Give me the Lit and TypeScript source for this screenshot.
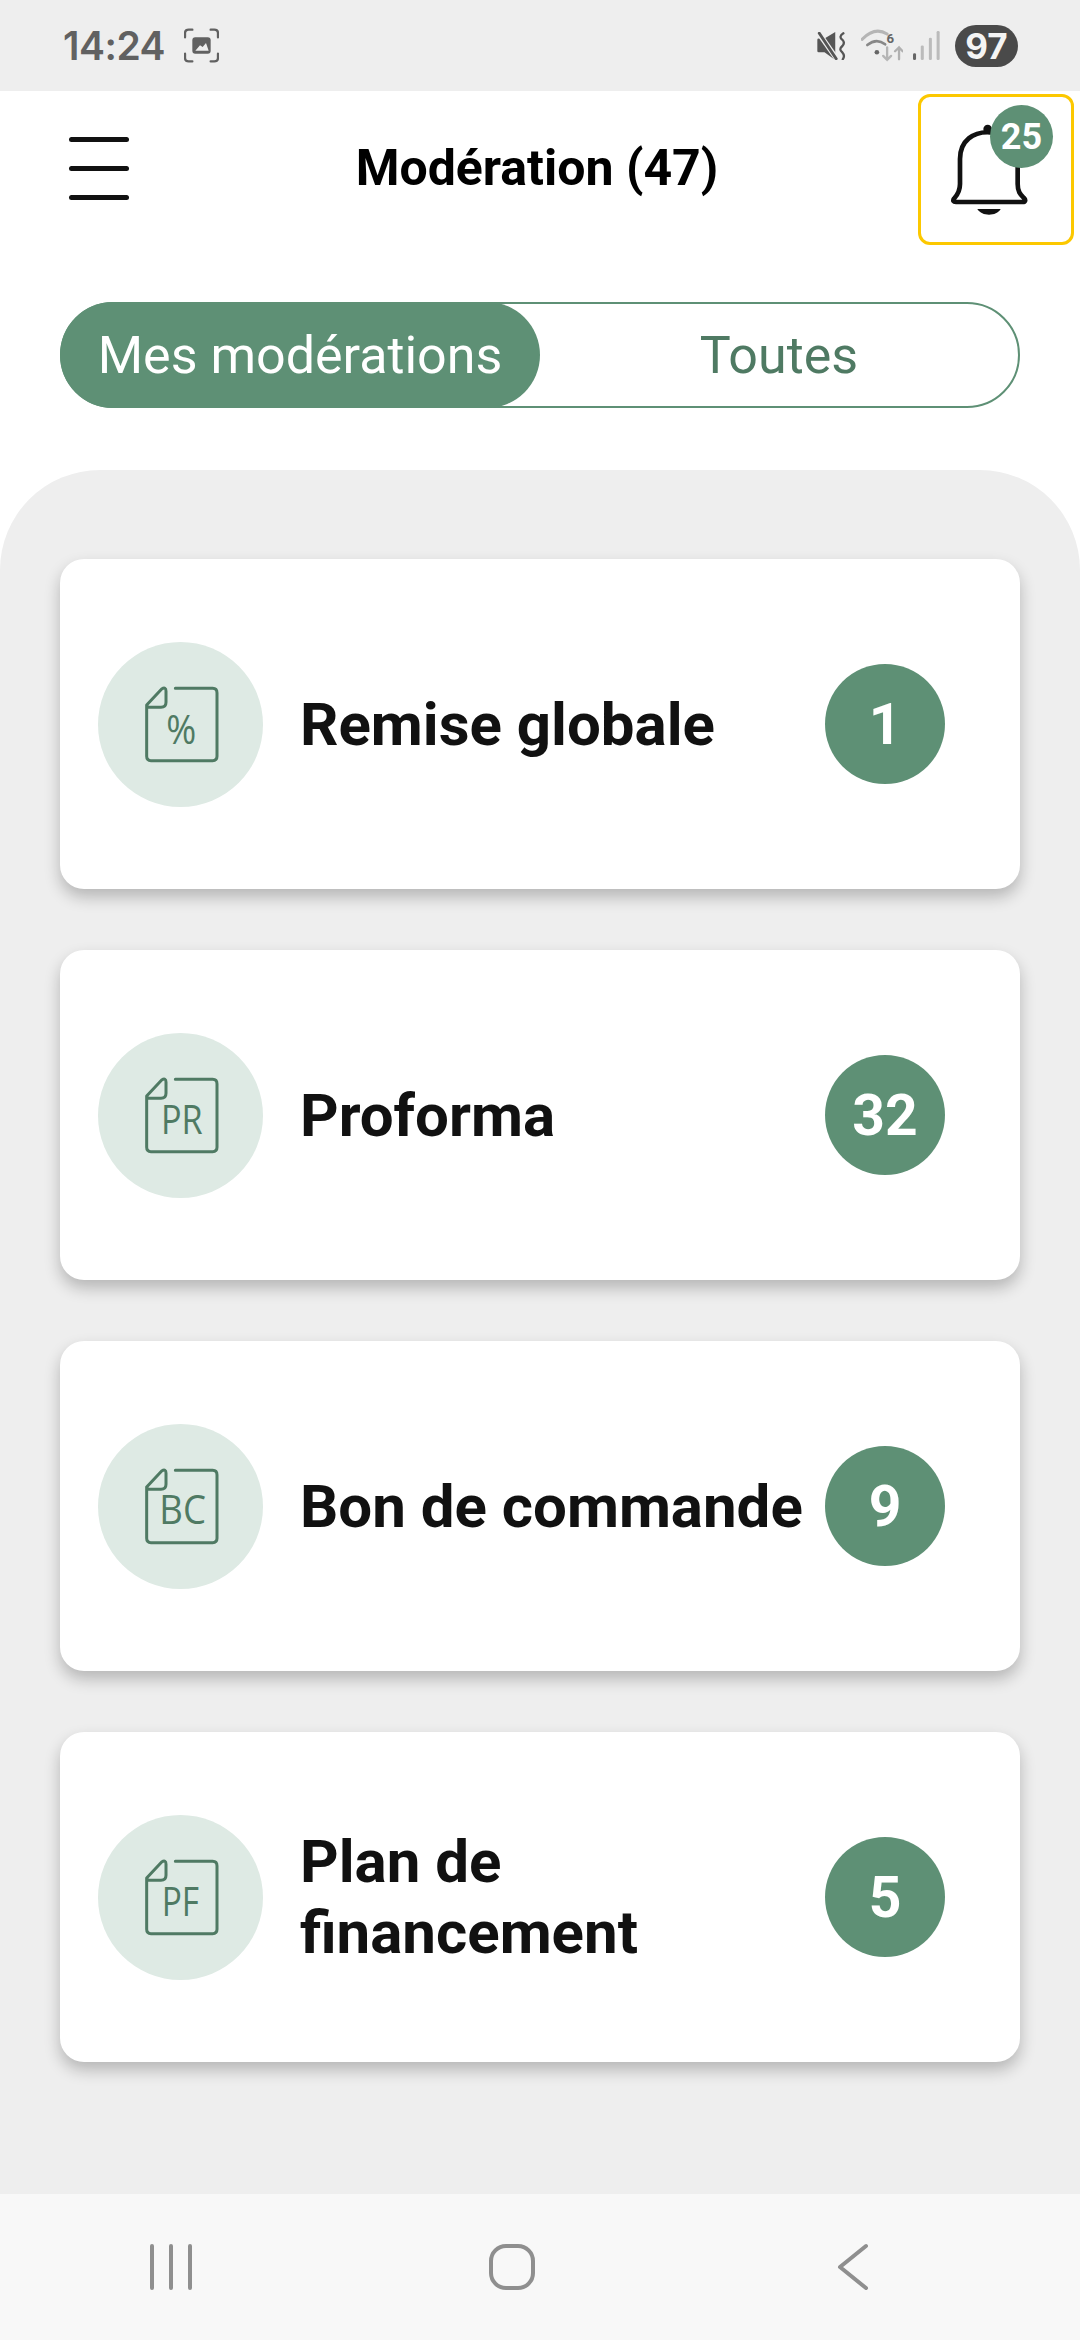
import { LitElement, html, css, svg } from "lit";
import { customElement, property } from "lit/decorators.js";

const FONT = 'Roboto, "Liberation Sans", sans-serif';

@customElement("doc-icon")
class DocIcon extends LitElement {
  @property() label = "";
  @property({ type: Number }) tx = 60;
  @property({ type: Number }) ty = 177;
  @property({ type: Number }) tw = 125;
  static styles = css`
    :host { display: block; width: 80px; height: 80px; }
    svg { display: block; }
    .outline { fill: none; stroke: #4f7a63; stroke-width: 9; stroke-linecap: round; stroke-linejoin: round; }
    .txt { font-family: "Open Sans", sans-serif; font-size: 122px; font-weight: 400; fill: #4f7a63; }
  `;
  render() {
    return html`<svg width="80" height="80" viewBox="0 0 240 240">
      <path class="outline" d="M103 13 H215 Q228 13 228 27 V217 Q228 230 215 230 H30 Q17 230 17 217 V63 M17 63 L62 15 Q75 7 75 22 V55 Q75 70 60 70 H25 Q17 70 17 63"></path>
      ${svg`<text class="txt" x=${this.tx} y=${this.ty} textLength=${this.tw} lengthAdjust="spacingAndGlyphs">${this.label}</text>`}
    </svg>`;
  }
}

@customElement("mod-card")
class ModCard extends LitElement {
  @property() label = "";
  @property() code = "";
  @property({ type: Number }) count = 0;
  @property({ type: Number }) tx = 60;
  @property({ type: Number }) ty = 177;
  @property({ type: Number }) tw = 125;
  static styles = css`
    :host { display: flex; align-items: center; height: 330px; background: #fff; border-radius: 24px;
      box-shadow: 0 8px 16px rgba(0,0,0,.24); padding: 0 75px 0 38px; box-sizing: border-box; font-family: ${css([FONT] as any)}; }
    .circle { width: 165px; height: 165px; border-radius: 50%; background: #deeae4; display: flex; align-items: center; justify-content: center; flex: none; }
    .label { flex: 1; margin-left: 37px; font-size: 60px; line-height: 71px; font-weight: 700; color: #111; }
    .count { width: 120px; height: 120px; border-radius: 50%; background: #5e9075; color: #fff; font-size: 57px; font-weight: 700; display: flex; align-items: center; justify-content: center; flex: none; }
  `;
  render() {
    return html`<div class="circle"><doc-icon .label=${this.code} .tx=${this.tx} .ty=${this.ty} .tw=${this.tw}></doc-icon></div>
      <div class="label">${this.label}</div>
      <div class="count">${this.count}</div>`;
  }
}

@customElement("app-root")
class AppRoot extends LitElement {
  static styles = css`
    :host { display: flex; flex-direction: column; width: 1080px; height: 2340px; background: #fff; font-family: ${css([FONT] as any)}; overflow: hidden; }
    svg { display: block; flex: none; }
    .status { height: 91px; background: #eee; display: flex; align-items: center; padding: 0 62px 0 63px; box-sizing: border-box; flex: none; }
    .time { font-size: 39px; font-weight: 600; color: #616161; margin-right: 19px; font-family: Inter, Roboto, sans-serif; letter-spacing: -.5px; }
    .spacer { flex: 1; }
    .batt { width: 63px; height: 42px; border-radius: 21px; background: #4a4a4a; color: #f4f4f4; font-size: 35px; font-weight: 700; display: flex; align-items: center; justify-content: center; margin-left: 15px; font-family: Inter, Roboto, sans-serif; }
    .ml15 { margin-left: 15px; }
    .ml10 { margin-left: 10px; }
    .header { height: 154px; flex: none; display: grid; grid-template-columns: 1fr auto 1fr; align-items: center; padding-right: 6px; }
    .burger { margin-left: 69px; width: 60px; display: flex; flex-direction: column; gap: 24px; }
    .burger i { display: block; height: 5px; border-radius: 3px; background: #111; }
    .title { font-size: 50px; font-weight: 700; color: #000; }
    .bellbox { justify-self: end; position: relative; width: 156px; height: 151px; margin-top: 3px; box-sizing: border-box; border: 3px solid #fcc800; border-radius: 12px; }
    .bellbox svg { margin: -3px; }
    .bellbadge { position: absolute; left: 69px; top: 8px; width: 63px; height: 63px; border-radius: 50%; background: #5e9075; color: #fff; font-size: 36px; font-weight: 700; display: flex; align-items: center; justify-content: center; }
    .toggle { margin: 57px 60px 0; height: 106px; flex: none; box-sizing: border-box; border: 2px solid #5e9075; border-radius: 53px; display: flex; font-size: 52px; }
    .seg { flex: 1; display: flex; align-items: center; justify-content: center; color: #4f7a63; }
    .seg.on { flex: none; width: 480px; margin: -2px 0 -2px -2px; background: #5e9075; color: #fff; border-radius: 53px; }
    .panel { flex: 1; margin-top: 62px; background: #eee; border-radius: 100px 100px 0 0; padding: 89px 60px 0; display: flex; flex-direction: column; gap: 61px; }
    .nav { height: 146px; flex: none; background: #f8f8f8; position: relative; display: grid; grid-template-columns: 1fr 1fr 1fr; align-items: center; justify-items: center; padding: 0 57px 0 0; box-sizing: border-box; }
    .navicon { fill: none; stroke: #8f8f8f; stroke-width: 4; stroke-linecap: round; stroke-linejoin: round; }
    .wlabel { font-family: Roboto, sans-serif; font-weight: 700; font-size: 40px; fill: #666; }
  `;
  render() {
    return html`
      <div class="status">
        <span class="time">14:24</span>
        <svg width="35" height="35" viewBox="460 55 105 103">
          <path d="M463 82 V70 Q463 59 474 59 H485 M540 59 H551 Q562 59 562 70 V82 M562 131 V143 Q562 154 551 154 H540 M485 154 H474 Q463 154 463 143 V131" fill="none" stroke="#616161" stroke-width="7" stroke-linecap="round"></path>
          <rect x="485" y="82" width="55" height="49" rx="9" fill="#616161"></rect>
          <path d="M494 122 L508 106 L516 111 L526 99 L534 122 Z" fill="#eee"></path>
        </svg>
        <span class="spacer"></span>
        <svg width="29" height="28" viewBox="110 62 87 86">
          <path d="M110 86 Q110 82 114 82 H132 L165 62 V148 L132 124 H114 Q110 124 110 120 Z" fill="#555"></path>
          <path d="M112 62 L172 148" stroke="#eee" stroke-width="16"></path>
          <path d="M116 66 L168 144" stroke="#555" stroke-width="9" stroke-linecap="round"></path>
          <path d="M190 66 Q174 76 187 86 Q196 95 187 105 Q174 115 187 125 Q196 135 188 146" fill="none" stroke="#555" stroke-width="7" stroke-linecap="round"></path>
        </svg>
        <svg class="ml15" width="42" height="33" viewBox="243 58 127 97">
          <path d="M246 88 Q285 48 322 72" fill="none" stroke="#b5b5b5" stroke-width="9" stroke-linecap="round"></path>
          <path d="M262 105 Q290 82 316 103" fill="none" stroke="#888" stroke-width="8" stroke-linecap="round"></path>
          <circle cx="291" cy="127" r="7" fill="#666"></circle>
          <text class="wlabel" x="320" y="98">6</text>
          <path d="M322 112 V150 M310 138 L322 150 L334 138" fill="none" stroke="#b5b5b5" stroke-width="7" stroke-linecap="round"></path>
          <path d="M358 148 V112 M346 124 L358 112 L369 124" fill="none" stroke="#b0b0b0" stroke-width="7" stroke-linecap="round"></path>
        </svg>
        <svg class="ml10" width="27" height="29" viewBox="400 62 80 86">
          <rect x="400" y="128" width="9" height="20" rx="4" fill="#666"></rect>
          <rect x="423" y="105" width="9" height="43" rx="4" fill="#bbb"></rect>
          <rect x="447" y="82" width="9" height="66" rx="4" fill="#bbb"></rect>
          <rect x="470" y="62" width="9" height="86" rx="4" fill="#bbb"></rect>
        </svg>
        <span class="batt">97</span>
      </div>
      <div class="header">
        <div class="burger"><i></i><i></i><i></i></div>
        <div class="title">Modération (47)</div>
        <div class="bellbox">
          <svg width="156" height="151" viewBox="474 280 468 453">
            <path d="M690 395 C640 392 600 420 600 475 V550 C600 575 590 585 582 594 C578 600 580 604 588 604 H788 C796 604 798 598 792 592 C782 582 773 575 773 550 V475 C773 430 735 395 690 395 Z" fill="none" stroke="#111" stroke-width="14" stroke-linejoin="round"></path>
            <circle cx="683" cy="385" r="13" fill="#111"></circle>
            <path d="M652 625 H722 C715 637 702 642 687 642 C672 642 660 637 652 625 Z" fill="#111"></path>
          </svg>
          <div class="bellbadge">25</div>
        </div>
      </div>
      <div class="toggle">
        <div class="seg on">Mes modérations</div>
        <div class="seg">Toutes</div>
      </div>
      <div class="panel">
        <mod-card label="Remise globale" code="%" .count=${1} .tx=${76} .ty=${180} .tw=${90}></mod-card>
        <mod-card label="Proforma" code="PR" .count=${32} .tx=${60} .ty=${177} .tw=${125}></mod-card>
        <mod-card label="Bon de commande" code="BC" .count=${9} .tx=${55} .ty=${175} .tw=${140}></mod-card>
        <mod-card label="Plan de financement" code="PF" .count=${5} .tx=${62} .ty=${177} .tw=${112}></mod-card>
      </div>
      <div class="nav">
        <svg width="44" height="48" viewBox="0 0 44 48"><path class="navicon" d="M3 3 V45 M22 3 V45 M41 3 V45"></path></svg>
        <svg width="48" height="48" viewBox="0 0 48 48"><rect class="navicon" x="3" y="3" width="42" height="42" rx="15"></rect></svg>
        <svg width="32" height="48" viewBox="0 0 32 48"><path class="navicon" d="M29 3 L3 24 L29 45"></path></svg>
      </div>
    `;
  }
}
